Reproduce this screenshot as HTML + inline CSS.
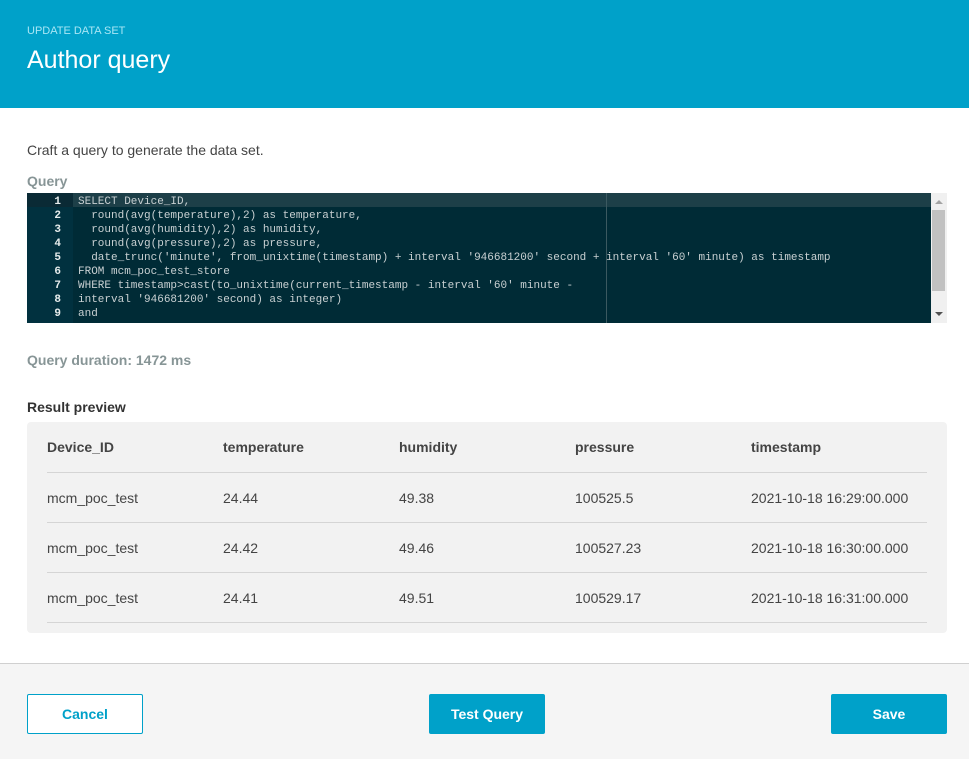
<!DOCTYPE html>
<html><head><meta charset="utf-8"><style>
*{margin:0;padding:0;box-sizing:border-box}
body{width:969px;height:759px;background:#fff;font-family:"Liberation Sans",sans-serif;position:relative;overflow:hidden;color:#444}
.a{position:absolute;white-space:nowrap}
.hdr{position:absolute;left:0;top:0;width:969px;height:108px;background:#00a1c9}
.ed{position:absolute;left:27px;top:193px;width:920px;height:130px;background:#002b36;overflow:hidden;font-family:"Liberation Mono",monospace;font-size:11px;color:#c8d0d2}
.gut{position:absolute;left:0;top:0;width:46px;height:130px;background:#01313f}
.ln{position:absolute;left:0;width:34px;text-align:right;color:#e6ecec;font-weight:bold;height:14px;line-height:14px}
.cl{position:absolute;left:51px;height:14px;line-height:14px;white-space:pre}
.th{font-weight:bold;font-size:14px;color:#444}
.td{font-size:14px;color:#444}
.hr{position:absolute;left:47px;width:880px;height:1px;background:#d5d5d5}
.btn{position:absolute;top:694px;width:116px;height:40px;border-radius:2px;font-weight:bold;font-size:14px;text-align:center;line-height:40px}
</style></head><body>
<div class="hdr"></div>
<div class="a" style="left:27px;top:25px;font-size:11px;color:#a8e6f5">UPDATE DATA SET</div>
<div class="a" style="left:27px;top:46px;font-size:25px;color:#fff">Author query</div>
<div class="a" style="left:27px;top:142px;font-size:14px;color:#444">Craft a query to generate the data set.</div>
<div class="a" style="left:27px;top:173px;font-size:14px;font-weight:bold;color:#879596">Query</div>
<div class="ed">
<div class="gut"></div>
<div style="position:absolute;left:0;top:0;width:904px;height:14px;background:#1d3f48"></div>
<div style="position:absolute;left:0;top:0;width:46px;height:14px;background:#0a2a35"></div>
<div style="position:absolute;left:579px;top:0;width:1px;height:130px;background:#3b5960"></div>
<div style="position:absolute;left:904px;top:0;width:16px;height:130px;background:#f0f0f0"></div>
<div style="position:absolute;left:905px;top:17px;width:13px;height:81px;background:#c1c1c1"></div>
<div style="position:absolute;left:908px;top:7px;width:0;height:0;border-left:4px solid transparent;border-right:4px solid transparent;border-bottom:4px solid #a3a3a3"></div>
<div style="position:absolute;left:908px;top:119px;width:0;height:0;border-left:4px solid transparent;border-right:4px solid transparent;border-top:4px solid #505050"></div>
<div style="position:absolute;left:0;top:2px;width:904px">
<div class="ln" style="top:0">1</div><div class="ln" style="top:14px">2</div><div class="ln" style="top:28px">3</div><div class="ln" style="top:42px">4</div><div class="ln" style="top:56px">5</div><div class="ln" style="top:70px">6</div><div class="ln" style="top:84px">7</div><div class="ln" style="top:98px">8</div><div class="ln" style="top:112px">9</div><div class="ln" style="top:127px">10</div>
<div class="cl" style="top:0">SELECT Device_ID,</div>
<div class="cl" style="top:14px">  round(avg(temperature),2) as temperature,</div>
<div class="cl" style="top:28px">  round(avg(humidity),2) as humidity,</div>
<div class="cl" style="top:42px">  round(avg(pressure),2) as pressure,</div>
<div class="cl" style="top:56px">  date_trunc('minute', from_unixtime(timestamp) + interval '946681200' second + interval '60' minute) as timestamp</div>
<div class="cl" style="top:70px">FROM mcm_poc_test_store</div>
<div class="cl" style="top:84px">WHERE timestamp&gt;cast(to_unixtime(current_timestamp - interval '60' minute -</div>
<div class="cl" style="top:98px">interval '946681200' second) as integer)</div>
<div class="cl" style="top:112px">and</div>
<div class="cl" style="top:127px">timestamp&lt;cast(to_unixtime(current_timestamp + interval '946681200' second) as integer)</div>
</div>
</div>
<div class="a" style="left:27px;top:352px;font-size:14px;font-weight:bold;color:#879596">Query duration: 1472 ms</div>
<div class="a" style="left:27px;top:399px;font-size:14px;font-weight:bold;color:#333">Result preview</div>
<div style="position:absolute;left:27px;top:422px;width:920px;height:211px;background:#f2f2f2;border-radius:4px"></div>
<div class="a th" style="left:47px;top:439px">Device_ID</div>
<div class="a th" style="left:223px;top:439px">temperature</div>
<div class="a th" style="left:399px;top:439px">humidity</div>
<div class="a th" style="left:575px;top:439px">pressure</div>
<div class="a th" style="left:751px;top:439px">timestamp</div>
<div class="hr" style="top:472px"></div>
<div class="a td" style="left:47px;top:490px">mcm_poc_test</div><div class="a td" style="left:223px;top:490px">24.44</div><div class="a td" style="left:399px;top:490px">49.38</div><div class="a td" style="left:575px;top:490px">100525.5</div><div class="a td" style="left:751px;top:490px">2021-10-18 16:29:00.000</div>
<div class="hr" style="top:522px"></div>
<div class="a td" style="left:47px;top:540px">mcm_poc_test</div><div class="a td" style="left:223px;top:540px">24.42</div><div class="a td" style="left:399px;top:540px">49.46</div><div class="a td" style="left:575px;top:540px">100527.23</div><div class="a td" style="left:751px;top:540px">2021-10-18 16:30:00.000</div>
<div class="hr" style="top:572px"></div>
<div class="a td" style="left:47px;top:590px">mcm_poc_test</div><div class="a td" style="left:223px;top:590px">24.41</div><div class="a td" style="left:399px;top:590px">49.51</div><div class="a td" style="left:575px;top:590px">100529.17</div><div class="a td" style="left:751px;top:590px">2021-10-18 16:31:00.000</div>
<div class="hr" style="top:622px"></div>
<div style="position:absolute;left:0;top:663px;width:969px;height:96px;background:#f5f5f5;border-top:1px solid #d0d0d0"></div>
<div class="btn" style="left:27px;border:1px solid #00a1c9;background:#fff;color:#00a1c9;line-height:38px">Cancel</div>
<div class="btn" style="left:429px;background:#00a1c9;color:#fff">Test Query</div>
<div class="btn" style="left:831px;background:#00a1c9;color:#fff">Save</div>
</body></html>
